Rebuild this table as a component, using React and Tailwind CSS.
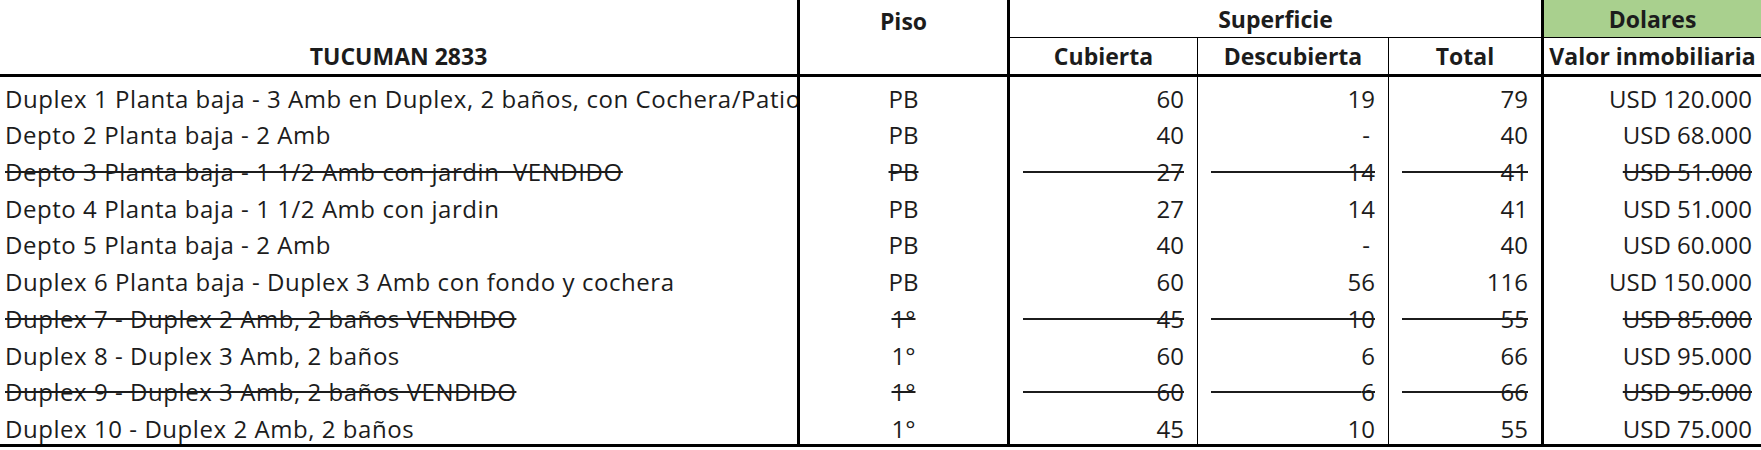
import React from "react";

const rows = [
  { d: "Duplex 1 Planta baja - 3 Amb en Duplex, 2 baños, con Cochera/Patio", p: "PB", c: "60", ds: "19", t: "79", v: "USD 120.000" },
  { d: "Depto 2 Planta baja - 2 Amb", p: "PB", c: "40", ds: "-", t: "40", v: "USD 68.000" },
  { d: "Depto 3 Planta baja - 1 1/2 Amb con jardin  VENDIDO", p: "PB", c: "27", ds: "14", t: "41", v: "USD 51.000", s: true },
  { d: "Depto 4 Planta baja - 1 1/2 Amb con jardin", p: "PB", c: "27", ds: "14", t: "41", v: "USD 51.000" },
  { d: "Depto 5 Planta baja - 2 Amb", p: "PB", c: "40", ds: "-", t: "40", v: "USD 60.000" },
  { d: "Duplex 6 Planta baja - Duplex 3 Amb con fondo y cochera", p: "PB", c: "60", ds: "56", t: "116", v: "USD 150.000" },
  { d: "Duplex 7 - Duplex 2 Amb, 2 baños VENDIDO", p: "1°", c: "45", ds: "10", t: "55", v: "USD 85.000", s: true },
  { d: "Duplex 8 - Duplex 3 Amb, 2 baños", p: "1°", c: "60", ds: "6", t: "66", v: "USD 95.000" },
  { d: "Duplex 9 - Duplex 3 Amb, 2 baños VENDIDO", p: "1°", c: "60", ds: "6", t: "66", v: "USD 95.000", s: true },
  { d: "Duplex 10 - Duplex 2 Amb, 2 baños", p: "1°", c: "45", ds: "10", t: "55", v: "USD 75.000" },
];

const FILL = "\u00A0".repeat(60);

function Num({ value, strike, border }) {
  const dash = value === "-";
  return (
    <div className={`${border} h-[36.7px] flex items-end pl-[13px] ${dash ? "pr-[18px]" : "pr-[13px]"}`}>
      {strike ? (
        <span className="flex-1 min-w-0 overflow-hidden whitespace-nowrap line-through">{FILL}</span>
      ) : (
        <span className="flex-1" />
      )}
      <span className={strike ? "line-through" : ""}>{value}</span>
    </div>
  );
}

export default function App() {
  return (
    <div
      className="w-[1761px] h-[450px] bg-white text-[#1c1c1c] text-[24px] leading-[30px] overflow-hidden"
      style={{ fontFamily: "'Open Sans', sans-serif" }}
    >
      <div className="grid grid-cols-[797px_210px_190px_191px_153px_220px]">
        {/* header */}
        <div className="row-span-2 flex items-end justify-center pb-[3px] font-bold text-[23px]">TUCUMAN 2833</div>
        <div className="row-span-2 border-l-[3px] border-black flex justify-center pt-[6px] font-bold text-[23px]">Piso</div>
        <div className="col-span-3 h-[38px] border-l-[3px] border-b border-black flex items-end justify-center pb-[3px] font-bold text-[23px]">
          Superficie
        </div>
        <div className="h-[38px] border-l-[3px] border-b border-black bg-[#a9d08e] flex items-end justify-center pb-[3px] font-bold text-[23px]">
          Dolares
        </div>
        <div className="h-[36px] border-l-[3px] border-black flex items-end justify-center pb-[3px] font-bold text-[23px]">Cubierta</div>
        <div className="h-[36px] border-l border-black flex items-end justify-center pb-[3px] font-bold text-[23px]">Descubierta</div>
        <div className="h-[36px] border-l border-black flex items-end justify-center pb-[3px] font-bold text-[23px]">Total</div>
        <div className="h-[36px] border-l-[3px] border-black flex items-end justify-center pb-[3px] font-bold text-[23px] whitespace-nowrap overflow-hidden">
          Valor inmobiliaria
        </div>
        <div className="col-span-6 h-[3px] bg-black" />

        {rows.map((r, i) => (
          <React.Fragment key={i}>
            <div className="h-[36.7px] flex items-end pl-[5px] overflow-hidden whitespace-pre tracking-[0.55px]">
              <span className={r.s ? "line-through" : ""}>{r.d}</span>
            </div>
            <div className="h-[36.7px] border-l-[3px] border-black flex items-end justify-center">
              <span className={r.s ? "line-through" : ""}>{r.p}</span>
            </div>
            <Num value={r.c} strike={r.s} border="border-l-[3px] border-black" />
            <Num value={r.ds} strike={r.s} border="border-l border-black" />
            <Num value={r.t} strike={r.s} border="border-l border-black" />
            <div className="h-[36.7px] border-l-[3px] border-black flex items-end justify-end pr-[9px]">
              <span className={r.s ? "line-through" : ""}>{r.v}</span>
            </div>
          </React.Fragment>
        ))}
        <div className="col-span-6 h-[3px] bg-black" />
      </div>
    </div>
  );
}
